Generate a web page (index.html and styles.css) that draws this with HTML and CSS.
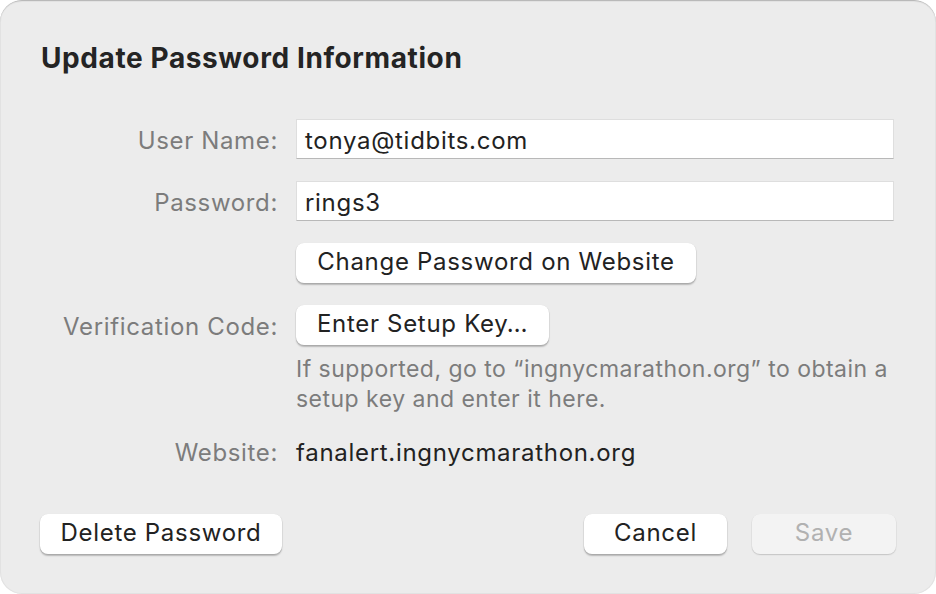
FILE: index.html
```html
<!DOCTYPE html>
<html>
<head>
<meta charset="utf-8">
<link rel="stylesheet" href="styles.css">
</head>
<body>
<div class="window">
  <h1 class="title">Update Password Information</h1>
  <div class="form">
    <div class="label">User Name:</div>
    <div class="field">tonya@tidbits.com</div>

    <div class="label">Password:</div>
    <div class="field">rings3</div>

    <div class="label"></div>
    <div class="cell"><button class="btn btn-wide">Change Password on Website</button></div>

    <div class="label">Verification Code:</div>
    <div class="cell"><button class="btn btn-key">Enter Setup Key…</button></div>

    <div class="label"></div>
    <p class="help">If supported, go to “ingnycmarathon.org” to obtain a setup key and enter it here.</p>

    <div class="label label-web">Website:</div>
    <div class="value">fanalert.ingnycmarathon.org</div>
  </div>
  <div class="actions">
    <button class="btn btn-delete">Delete Password</button>
    <div class="actions-right">
      <button class="btn btn-cancel">Cancel</button>
      <button class="btn btn-save" disabled>Save</button>
    </div>
  </div>
</div>
</body>
</html>
```
FILE: styles.css
```css
* { box-sizing: border-box; }
html, body {
  margin: 0;
  padding: 0;
  background: #ffffff;
}
body {
  width: 936px;
  height: 594px;
  font-family: Inter, "Noto Sans", "Liberation Sans", sans-serif;
  color: #222222;
}
.window {
  width: 936px;
  height: 594px;
  background: #ececec;
  border-radius: 22px;
  border-top: 1px solid #b9b9b9;
  box-shadow: inset 0 0 0 1px #e2e2e2;
  padding: 0 40px;
  display: flex;
  flex-direction: column;
}
.title {
  margin: 40px 0 0 1px;
  font-size: 28px;
  line-height: 34px;
  font-weight: 700;
  color: #242424;
  letter-spacing: 0.6px;
}
.form {
  margin-top: 44px;
  display: grid;
  grid-template-columns: 238px 598px;
  column-gap: 18px;
  grid-template-rows: 40px 40px 40px 40px auto 30px;
  row-gap: 22px;
}
.label {
  display: flex;
  align-items: center;
  justify-content: flex-end;
  font-size: 24px;
  letter-spacing: 0.65px;
  color: #7c7c7c;
  height: 40px;
  padding-top: 2px;
}
.field {
  height: 40px;
  background: #ffffff;
  border: 1px solid #dedede;
  border-bottom-color: #b8b8b8;
  padding: 2px 8px 0;
  display: flex;
  align-items: center;
  font-size: 24px;
  letter-spacing: 0.7px;
  color: #222222;
}
.cell {
  display: flex;
  align-items: center;
}
.btn {
  font-family: inherit;
  height: 40px;
  background: #ffffff;
  border: none;
  border-radius: 8px;
  box-shadow: 0 0.5px 0 0.5px rgba(0, 0, 0, 0.08), 0 1.5px 1.5px rgba(0, 0, 0, 0.22);
  font-size: 24px;
  letter-spacing: 0.7px;
  color: #222222;
  padding: 0 10px 3px;
  display: flex;
  align-items: center;
  justify-content: center;
}
.btn-wide { width: 400px; }
.btn-key { width: 253px; }
.help {
  margin: -13px 0 0;
  font-size: 23px;
  letter-spacing: 0.48px;
  line-height: 30px;
  color: #7c7c7c;
}
.label-web, .value {
  height: 30px;
  margin-top: 0;
}
.value {
  display: flex;
  align-items: center;
  font-size: 24px;
  letter-spacing: 0.7px;
  color: #222222;
  padding-top: 2px;
}
.actions {
  margin-top: auto;
  margin-bottom: 40px;
  display: flex;
  justify-content: space-between;
  align-items: center;
}
.actions-right {
  display: flex;
  gap: 25px;
}
.btn-delete { width: 242px; }
.btn-cancel { width: 143px; }
.btn-save {
  width: 144px;
  background: #f3f3f3;
  color: #b1b1b1;
  box-shadow: 0 0.5px 0 0.5px rgba(0, 0, 0, 0.05), 0 1px 1.5px rgba(0, 0, 0, 0.12);
}
```
